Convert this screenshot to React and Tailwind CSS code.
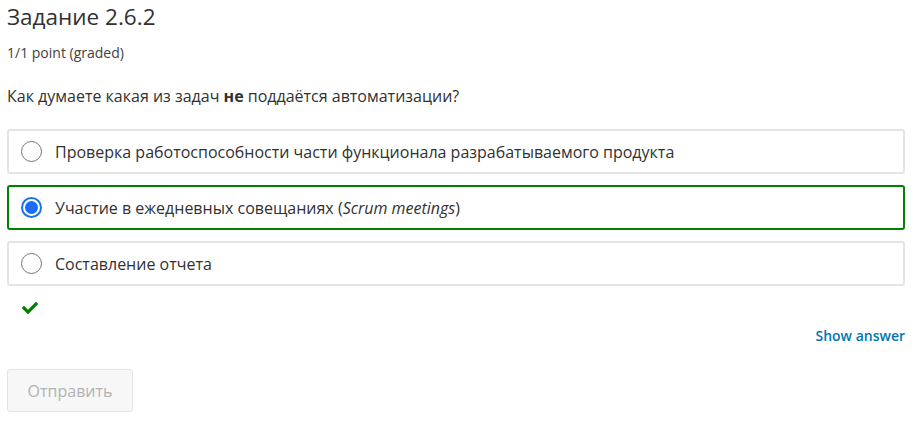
import { FaCheck } from "react-icons/fa";

const options = [
  { id: 1, label: "Проверка работоспособности части функционала разрабатываемого продукта" },
  { id: 2, label: "Участие в ежедневных совещаниях", italic: "Scrum meetings", checked: true },
  { id: 3, label: "Составление отчета" },
];

const Radio = ({ checked }) => (
  <span
    className={
      checked
        ? "flex h-[21px] w-[21px] shrink-0 items-center justify-center rounded-full border-2 border-[#1a73e8] bg-white"
        : "flex h-[21px] w-[21px] shrink-0 items-center justify-center rounded-full border border-[#767676] bg-white"
    }
  >
    {checked && <span className="h-[13px] w-[13px] rounded-full bg-[#1a6cff]"></span>}
  </span>
);

export default function App() {
  return (
    <div
      className="min-h-screen bg-white pl-[7px] pr-[12px] text-[#313131]"
      style={{ fontFamily: '"Open Sans", "Liberation Sans", sans-serif' }}
    >
      <h2 className="pt-[2px] text-[22.5px] leading-[30px] text-[#313131]">Задание 2.6.2</h2>
      <div className="mt-[11px] text-[14px] leading-[20px] text-[#414141]">1/1 point (graded)</div>
      <p className="mt-[21px] text-[16px] leading-[24px]">
        Как думаете какая из задач <b className="font-bold">не</b> поддаётся автоматизации?
      </p>

      <div className="mt-[21px] flex flex-col gap-[11px]">
        {options.map((o) => (
          <label
            key={o.id}
            className={
              o.checked
                ? "flex h-[45px] items-center gap-[13px] rounded-[3px] border-2 border-[#008100] px-[12px]"
                : "flex h-[45px] items-center gap-[13px] rounded-[3px] border-2 border-[#e4e4e4] px-[12px]"
            }
          >
            <Radio checked={o.checked} />
            <span className="text-[16px] leading-[24px] text-[#313131]">
              {o.label}
              {o.italic && (
                <>
                  {" ("}
                  <i>{o.italic}</i>
                  {")"}
                </>
              )}
            </span>
          </label>
        ))}
      </div>

      <div className="mt-[14px] pl-[15px] text-[#008100]">
        <FaCheck className="h-[16px] w-[16px]" />
      </div>

      <div className="mt-[10px] flex justify-end">
        <button className="text-[14px] font-semibold leading-[20px] text-[#0075b4]">Show answer</button>
      </div>

      <button className="mt-[23px] h-[43px] w-[126px] rounded-[3px] border border-[#e4e4e4] bg-[#f7f7f7] text-[16px] text-[#b2b2b2]">
        Отправить
      </button>
    </div>
  );
}
